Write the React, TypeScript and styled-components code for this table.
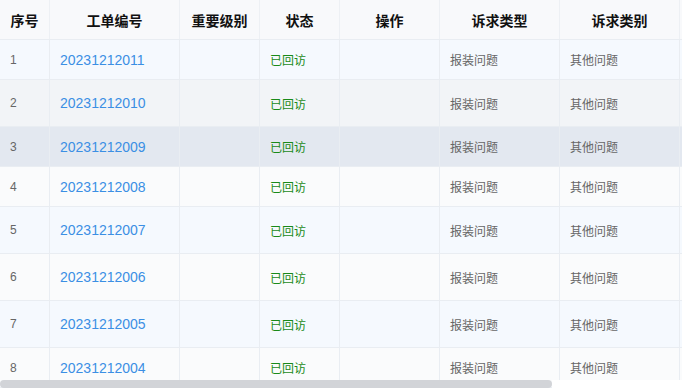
import React from 'react';
import styled, { createGlobalStyle } from 'styled-components';

const GlobalStyle = createGlobalStyle`
  html, body {
    margin: 0;
    padding: 0;
    background: #ffffff;
  }
  body {
    font-family: "Liberation Sans", Arial, "Noto Sans CJK SC", sans-serif;
  }
`;

const Wrapper = styled.div`
  position: relative;
  width: 682px;
  height: 390px;
  overflow: hidden;
`;

const Table = styled.div`
  width: 800px;
  display: flex;
  flex-direction: column;
`;

const columns = '50px 130px 80px 80px 100px 120px 120px 120px';

const HeaderRow = styled.div`
  display: grid;
  grid-template-columns: ${columns};
  height: 40px;
  background: #f8f9fb;
  border-bottom: 1px solid #e9edf2;
  box-sizing: border-box;
`;

const HeaderCell = styled.div`
  display: flex;
  align-items: center;
  justify-content: center;
  border-right: 1px solid #edf0f4;
  font-size: 14px;
  font-weight: bold;
  color: #111;
`;

const Row = styled.div<{ $h: number; $bg: string }>`
  display: grid;
  grid-template-columns: ${columns};
  height: ${(p) => p.$h}px;
  flex-shrink: 0;
  background: ${(p) => p.$bg};
  border-bottom: 1px solid #e9edf2;
  box-sizing: border-box;
`;

const Cell = styled.div`
  display: flex;
  align-items: center;
  padding-left: 10px;
  border-right: 1px solid #e9edf2;
  font-size: 12px;
  color: #666;
`;

const Link = styled.span`
  font-size: 14px;
  color: #3b8fe4;
`;

const Status = styled.span`
  font-size: 12px;
  color: #198a19;
`;

const ScrollBar = styled.div`
  position: absolute;
  left: 0;
  bottom: 2px;
  width: 552px;
  height: 8px;
  border-radius: 4px;
  background: #d2d4d8;
`;

const ScrollTrack = styled.div`
  position: absolute;
  left: 552px;
  right: 0;
  bottom: 0;
  height: 10px;
  background: #ffffff;
`;

const headers = ['序号', '工单编号', '重要级别', '状态', '操作', '诉求类型', '诉求类别', ''];

const rows = [
  { h: 40, bg: '#f5f9fe' },
  { h: 47, bg: '#f2f4f7' },
  { h: 40, bg: '#e3e8f0' },
  { h: 40, bg: '#fafbfc' },
  { h: 47, bg: '#f5f9fe' },
  { h: 47, bg: '#fafbfc' },
  { h: 47, bg: '#f5f9fe' },
  { h: 40, bg: '#fafbfc' },
];

const App = () => {
  return (
    <Wrapper>
      <GlobalStyle />
      <Table>
        <HeaderRow>
          {headers.map((h, i) => (
            <HeaderCell key={i}>{h}</HeaderCell>
          ))}
        </HeaderRow>
        {rows.map((r, i) => (
          <Row key={i} $h={r.h} $bg={r.bg}>
            <Cell>{i + 1}</Cell>
            <Cell>
              <Link>{20231212011 - i}</Link>
            </Cell>
            <Cell />
            <Cell>
              <Status>已回访</Status>
            </Cell>
            <Cell />
            <Cell>报装问题</Cell>
            <Cell>其他问题</Cell>
            <Cell />
          </Row>
        ))}
      </Table>
      <ScrollTrack />
      <ScrollBar />
    </Wrapper>
  );
};

export default App;
